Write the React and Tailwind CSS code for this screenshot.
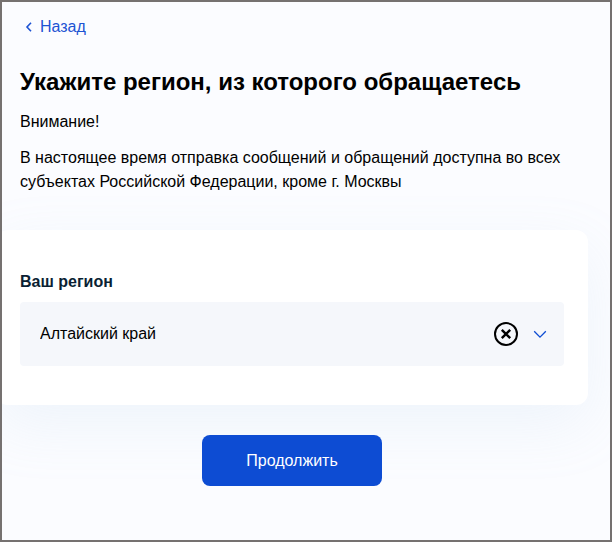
import React, {useState} from "react";

const REGIONS = [
    "Алтайский край",
    "Амурская область",
    "Архангельская область",
    "Астраханская область",
    "Белгородская область",
    "Московская область",
    "Санкт-Петербург"
];

function BackLink() {
    return (
        <a href="#back" className="inline-flex items-center gap-2 text-base leading-6 text-[#1d53d3]">
            <svg className="ml-1 h-3 w-2" viewBox="0 0 8 12" fill="none" aria-hidden="true">
                <path d="M7 1.7 3 6l4 4.3" stroke="currentColor" strokeWidth="1.6"/>
            </svg>
            Назад
        </a>
    );
}

function RegionSelect({value, onChange}) {
    return (
        <div>
            <label htmlFor="region" className="block text-base font-bold leading-6 text-[#0b1f33]">
                Ваш регион
            </label>
            <div className="relative mt-2">
                <select
                    id="region"
                    value={value}
                    onChange={(e) => onChange(e.target.value)}
                    className="block h-16 w-full appearance-none rounded border-0 bg-[#f5f7fb] pl-5 pr-20 text-base text-black"
                >
                    <option value=""></option>
                    {REGIONS.map((r) => (
                        <option key={r} value={r}>{r}</option>
                    ))}
                </select>
                <div className="pointer-events-none absolute inset-y-0 right-4 flex items-center gap-3">
                    {value && (
                        <button
                            type="button"
                            aria-label="Очистить"
                            onClick={() => onChange("")}
                            className="pointer-events-auto"
                        >
                            <svg className="block h-7 w-7" viewBox="0 0 28 28" fill="none">
                                <circle cx="14" cy="14" r="11" stroke="#000" strokeWidth="2"/>
                                <path d="m9.8 9.8 8.4 8.4M18.2 9.8l-8.4 8.4" stroke="#000" strokeWidth="2.4"/>
                            </svg>
                        </button>
                    )}
                    <svg className="h-4 w-4" viewBox="0 0 16 16" fill="none" aria-hidden="true">
                        <path d="m2.2 5.2 5.8 5.9 5.8-5.9" stroke="#0d4cd3" strokeWidth="1.3"/>
                    </svg>
                </div>
            </div>
        </div>
    );
}

export default function App() {
    const [region, setRegion] = useState("Алтайский край");

    return (
        <main className="min-h-screen overflow-hidden border-2 border-[#757170] bg-[#fbfcff] pt-[13px] font-['Liberation_Sans',Arial,sans-serif] text-black">
            <div className="px-[18px]">
                <BackLink/>
                <h1 className="mt-[26px] text-2xl font-bold leading-8">
                    Укажите регион, из которого обращаетесь
                </h1>
                <p className="mt-3 text-base leading-6">Внимание!</p>
                <p className="mt-3 text-base leading-6">
                    В настоящее время отправка сообщений и обращений доступна во всех
                    субъектах Российской Федерации, кроме г. Москвы
                </p>
            </div>

            <form className="-ml-1.5 mr-[22px] mt-9" onSubmit={(e) => e.preventDefault()}>
                <div className="rounded-xl bg-white px-6 pb-[39px] pt-10 shadow-[0_20px_60px_rgba(155,190,225,0.13)]">
                    <RegionSelect value={region} onChange={setRegion}/>
                </div>
                <div className="mt-[30px] flex justify-center">
                    <button
                        type="submit"
                        className="h-[51px] rounded-lg bg-[#0d4cd3] px-11 text-base leading-6 text-white"
                    >
                        Продолжить
                    </button>
                </div>
            </form>
        </main>
    );
}
